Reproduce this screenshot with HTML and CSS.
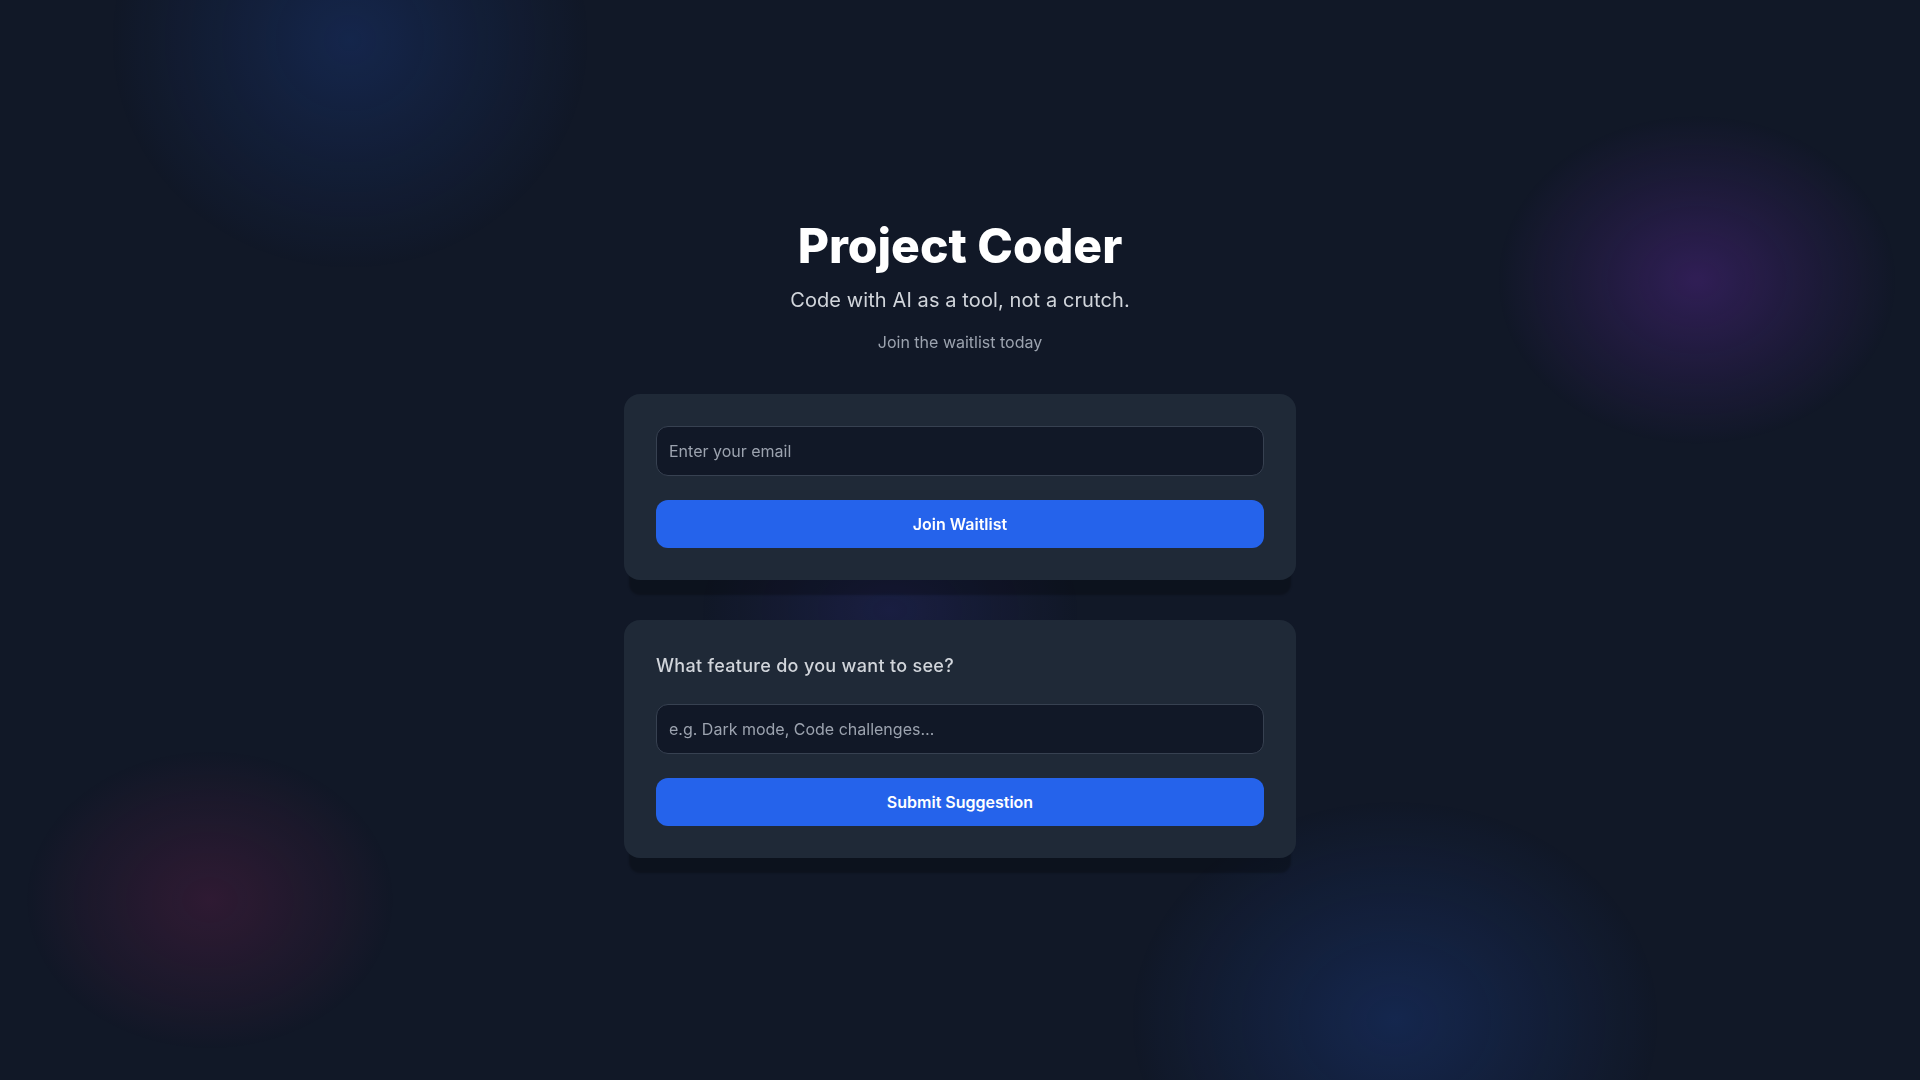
FILE: index.html
```html
<!DOCTYPE html>
<html lang="en">
<head>
<meta charset="utf-8">
<title>Project Coder</title>
<link rel="stylesheet" href="styles.css">
</head>
<body>
  <div class="bg">
    <div class="blob blob-tl"></div>
    <div class="blob blob-tr"></div>
    <div class="blob blob-bl"></div>
    <div class="blob blob-br"></div>
    <div class="blob blob-mid"></div>
  </div>

  <main class="wrap">
    <header class="hero">
      <h1 class="title">Project Coder</h1>
      <p class="subtitle">Code with AI as a tool, not a crutch.</p>
      <p class="tagline">Join the waitlist today</p>
    </header>

    <form class="card" onsubmit="return false">
      <input class="field" type="email" placeholder="Enter your email">
      <button class="btn" type="submit">Join Waitlist</button>
    </form>

    <form class="card" onsubmit="return false">
      <h2 class="card-title">What feature do you want to see?</h2>
      <input class="field" type="text" placeholder="e.g. Dark mode, Code challenges…">
      <button class="btn" type="submit">Submit Suggestion</button>
    </form>
  </main>
</body>
</html>
```

FILE: styles.css
```css
* { box-sizing: border-box; }

html, body {
  margin: 0;
  padding: 0;
  height: 100%;
  overflow: hidden;
}

body {
  background: #111827;
  font-family: Inter, "Noto Sans", "Liberation Sans", sans-serif;
  color: #ffffff;
  display: flex;
  align-items: center;
  justify-content: center;
}

.bg {
  position: fixed;
  inset: 0;
  overflow: hidden;
  pointer-events: none;
}

.blob {
  position: absolute;
  border-radius: 50%;
}

.blob-tl {
  left: 110px;
  top: -190px;
  width: 480px;
  height: 460px;
  background: radial-gradient(closest-side, rgba(37, 99, 235, 0.19), rgba(37, 99, 235, 0.09) 50%, rgba(37, 99, 235, 0) 100%);
}

.blob-tr {
  left: 1497px;
  top: 115px;
  width: 400px;
  height: 330px;
  background: radial-gradient(closest-side, rgba(147, 51, 234, 0.24), rgba(147, 51, 234, 0.1) 55%, rgba(147, 51, 234, 0) 100%);
}

.blob-bl {
  left: 25px;
  top: 750px;
  width: 370px;
  height: 300px;
  background: radial-gradient(closest-side, rgba(219, 39, 119, 0.15), rgba(219, 39, 119, 0.07) 55%, rgba(219, 39, 119, 0) 100%);
}

.blob-br {
  left: 1130px;
  top: 800px;
  width: 530px;
  height: 440px;
  background: radial-gradient(closest-side, rgba(37, 99, 235, 0.2), rgba(37, 99, 235, 0.09) 55%, rgba(37, 99, 235, 0) 100%);
}

.blob-mid {
  left: 700px;
  top: 480px;
  width: 380px;
  height: 260px;
  background: radial-gradient(closest-side, rgba(79, 70, 229, 0.14), rgba(79, 70, 229, 0.05) 60%, rgba(79, 70, 229, 0) 100%);
}

.wrap {
  position: relative;
  z-index: 1;
  width: 672px;
  display: flex;
  flex-direction: column;
  gap: 40px;
}

.hero {
  text-align: center;
  display: flex;
  flex-direction: column;
  align-items: center;
}

.title {
  margin: 0;
  font-size: 48px;
  line-height: 48px;
  font-weight: 800;
  color: #ffffff;
}

.subtitle {
  margin: 16px 0 0;
  font-size: 20px;
  line-height: 28px;
  color: #d1d5db;
  letter-spacing: 0.1px;
}

.tagline {
  margin: 16px 0 0;
  font-size: 16px;
  line-height: 24px;
  color: #9ca3af;
}

.card {
  margin: 0;
  background: #1f2937;
  border-radius: 16px;
  padding: 32px;
  display: flex;
  flex-direction: column;
  gap: 24px;
  box-shadow: 0 20px 2px -5px rgba(0, 0, 0, 0.25);
}

.card-title {
  margin: 0;
  font-size: 18px;
  line-height: 28px;
  font-weight: 500;
  color: #d1d5db;
  letter-spacing: 0.3px;
}

.field {
  display: block;
  width: 100%;
  height: 50px;
  padding: 12px;
  font-family: inherit;
  font-size: 16px;
  line-height: 24px;
  color: #ffffff;
  background: #111827;
  border: 1px solid #374151;
  border-radius: 12px;
  outline: none;
}

.field::placeholder {
  color: #9ca3af;
  opacity: 1;
}

.btn {
  display: block;
  width: 100%;
  height: 48px;
  padding: 12px;
  font-family: inherit;
  font-size: 16px;
  line-height: 24px;
  font-weight: 600;
  color: #ffffff;
  background: #2563eb;
  border: none;
  border-radius: 12px;
  cursor: pointer;
}
```
